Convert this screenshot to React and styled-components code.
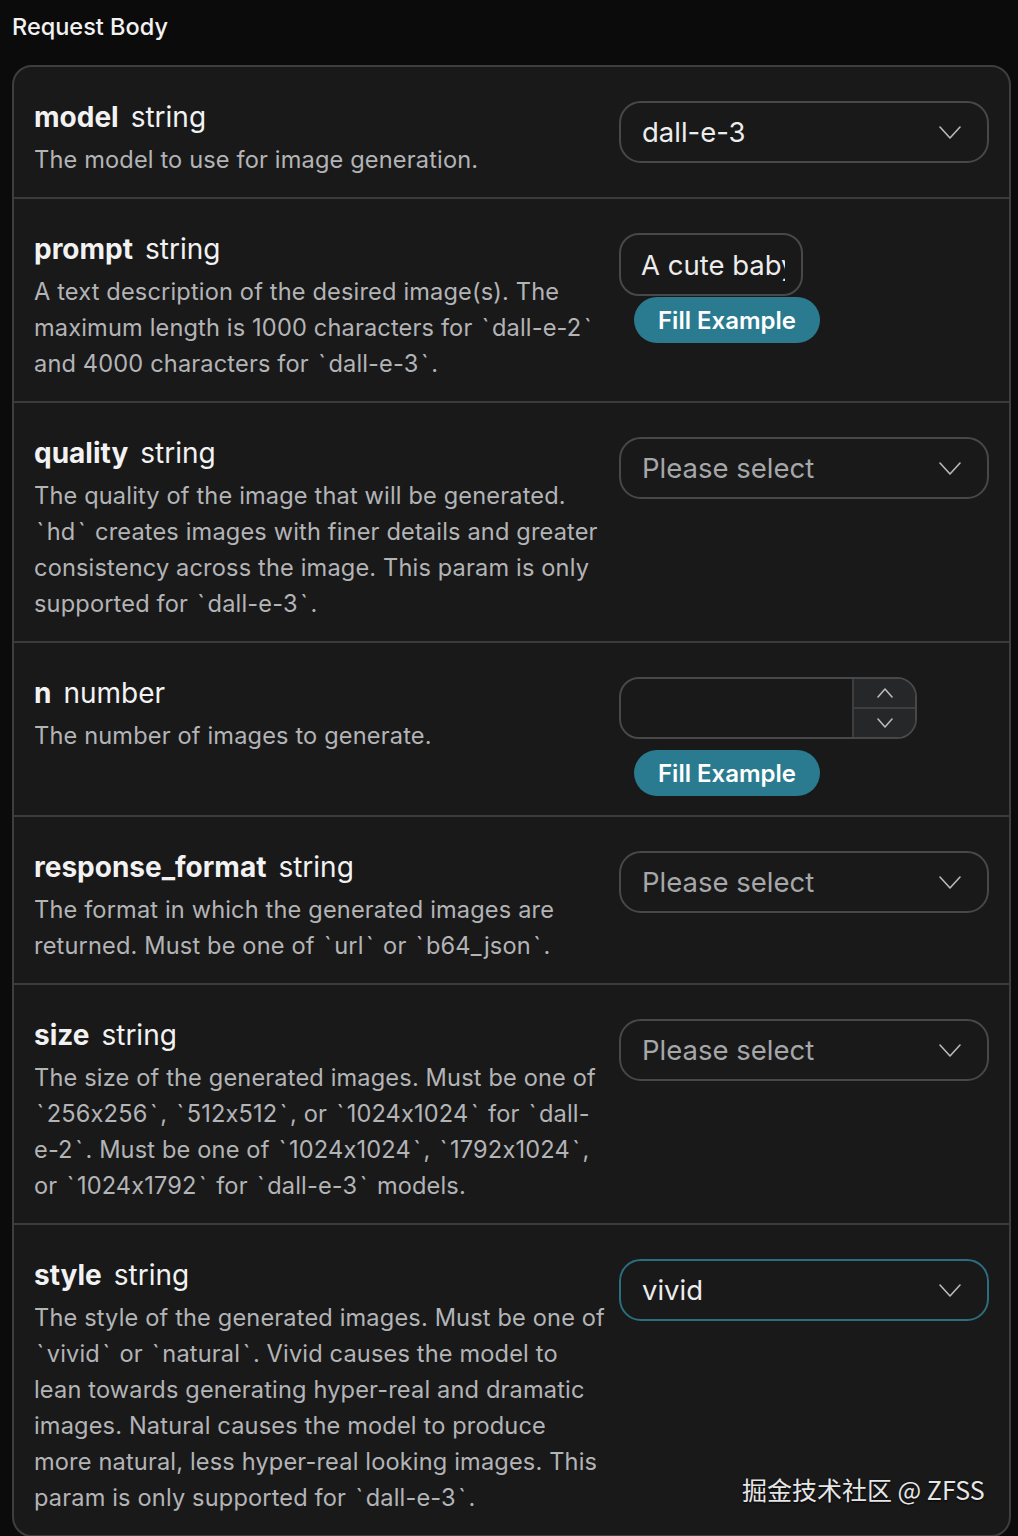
import styled, { createGlobalStyle } from "styled-components";

const GlobalStyle = createGlobalStyle`
  html, body {
    margin: 0;
    padding: 0;
    background: #0b0b0b;
    font-family: Inter, "Noto Sans", "Noto Sans CJK SC", sans-serif;
    font-feature-settings: "calt" 0;
    color: #ececec;
  }
  * { box-sizing: border-box; }
`;

const Page = styled.div`
  padding: 10px 7px 2px 12px;
`;

const Heading = styled.h2`
  margin: 0 0 21px;
  font-size: 23.5px;
  line-height: 34px;
  font-weight: 500;
  color: #f2f2f2;
`;

const Card = styled.div`
  border: 2px solid #3e3e3f;
  border-radius: 20px;
  background: #19191a;
  overflow: hidden;
`;

const Row = styled.div`
  display: flex;
  gap: 12px;
  padding: 32px 20px 19px 20px;
  & + & {
    border-top: 2px solid #3b3b3c;
  }
`;

const Info = styled.div`
  width: 573px;
  flex: none;
`;

const Title = styled.div`
  font-size: 28px;
  line-height: 36px;
  color: #f2f2f2;
  b {
    font-weight: 700;
    margin-right: 12px;
  }
`;

const Desc = styled.p`
  margin: 7px 0 0;
  font-size: 23.6px;
  line-height: 36px;
  letter-spacing: 0.15px;
  color: #b3b4b6;
`;

const Tick = styled.span`
  padding: 0 2.5px;
`;

const Controls = styled.div`
  display: flex;
  flex-direction: column;
  align-items: flex-start;
  padding-top: 2px;
`;

const Select = styled.div`
  width: 370px;
  height: 62px;
  border: 2px solid ${(p) => (p.$focused ? "#2b6e80" : "#48484a")};
  border-radius: 22px;
  display: flex;
  align-items: center;
  justify-content: space-between;
  padding: 0 26px 0 21px;
  font-size: 27.5px;
  color: ${(p) => (p.$placeholder ? "#a6a7a9" : "#ececec")};
`;

const TextInput = styled.div`
  width: 184px;
  height: 63px;
  border: 2px solid #48484a;
  border-radius: 20px;
  padding: 0 0 0 20px;
  display: flex;
  align-items: center;
  font-size: 27.5px;
  color: #ececec;
  white-space: nowrap;
  overflow: hidden;
  span {
    display: block;
    width: 144px;
    overflow: hidden;
  }
`;

const NumberInput = styled.div`
  width: 298px;
  height: 62px;
  border: 2px solid #48484a;
  border-radius: 20px;
  display: flex;
  overflow: hidden;
`;

const NumberField = styled.div`
  flex: 1;
`;

const Spinner = styled.div`
  width: 63px;
  display: flex;
  flex-direction: column;
  border-left: 2px solid #3e3e3f;
  background: #262728;
`;

const SpinBtn = styled.div`
  flex: 1;
  display: flex;
  align-items: center;
  justify-content: center;
  & + & {
    border-top: 2px solid #3e3e3f;
  }
`;

const FillButton = styled.button`
  margin: ${(p) => (p.$spaced ? "11px" : "1px")} 0 0 15px;
  height: 46px;
  padding: 0 24px;
  border: none;
  border-radius: 23px;
  background: #2a7b90;
  color: #ffffff;
  font-family: inherit;
  font-size: 24px;
  font-weight: 600;
`;

const Watermark = styled.div`
  position: absolute;
  left: 742px;
  top: 1472px;
  font-size: 25px;
  line-height: 34px;
  color: #e6e6e6;
  text-shadow: 0 1px 2px rgba(0, 0, 0, 0.8);
  font-family: "Noto Sans CJK SC", Inter, sans-serif;
`;

function Chevron({ up, size = 22, color = "#b9b9bb" }) {
  const h = size / 2;
  return (
    <svg width={size} height={h + 2} viewBox={`0 0 ${size} ${h + 2}`} fill="none">
      <path
        d={up ? `M1 ${h + 1} L${size / 2} 1 L${size - 1} ${h + 1}` : `M1 1 L${size / 2} ${h + 1} L${size - 1} 1`}
        stroke={color}
        strokeWidth="1.6"
        strokeLinecap="round"
        strokeLinejoin="round"
      />
    </svg>
  );
}

function SelectBox({ value, focused }) {
  return (
    <Select $placeholder={!value} $focused={focused}>
      <span>{value || "Please select"}</span>
      <Chevron />
    </Select>
  );
}

function withTicks(text) {
  const parts = text.split("`");
  return parts.flatMap((part, i) => (i === 0 ? [part] : [<Tick key={i}>`</Tick>, part]));
}

const params = [
  {
    name: "model",
    type: "string",
    desc: "The model to use for image generation.",
    control: <SelectBox value="dall-e-3" />,
  },
  {
    name: "prompt",
    type: "string",
    desc: "A text description of the desired image(s). The maximum length is 1000 characters for `dall-e-2` and 4000 characters for `dall-e-3`.",
    control: (
      <>
        <TextInput><span>A cute baby sea otter</span></TextInput>
        <FillButton>Fill Example</FillButton>
      </>
    ),
  },
  {
    name: "quality",
    type: "string",
    desc: "The quality of the image that will be generated. `hd` creates images with finer details and greater consistency across the image. This param is only supported for `dall-e-3`.",
    control: <SelectBox />,
  },
  {
    name: "n",
    type: "number",
    desc: "The number of images to generate.",
    control: (
      <>
        <NumberInput>
          <NumberField />
          <Spinner>
            <SpinBtn><Chevron up size={16} /></SpinBtn>
            <SpinBtn><Chevron size={16} /></SpinBtn>
          </Spinner>
        </NumberInput>
        <FillButton $spaced>Fill Example</FillButton>
      </>
    ),
  },
  {
    name: "response_format",
    type: "string",
    desc: "The format in which the generated images are returned. Must be one of `url` or `b64_json`.",
    control: <SelectBox />,
  },
  {
    name: "size",
    type: "string",
    desc: "The size of the generated images. Must be one of `256x256`, `512x512`, or `1024x1024` for `dall-e-2`. Must be one of `1024x1024`, `1792x1024`, or `1024x1792` for `dall-e-3` models.",
    control: <SelectBox />,
  },
  {
    name: "style",
    type: "string",
    desc: "The style of the generated images. Must be one of `vivid` or `natural`. Vivid causes the model to lean towards generating hyper-real and dramatic images. Natural causes the model to produce more natural, less hyper-real looking images. This param is only supported for `dall-e-3`.",
    control: <SelectBox value="vivid" focused />,
  },
];

export default function App() {
  return (
    <>
      <GlobalStyle />
      <Page>
        <Heading>Request Body</Heading>
        <Card>
          {params.map((p) => (
            <Row key={p.name}>
              <Info>
                <Title>
                  <b>{p.name}</b>
                  {p.type}
                </Title>
                <Desc>{withTicks(p.desc)}</Desc>
              </Info>
              <Controls>{p.control}</Controls>
            </Row>
          ))}
        </Card>
      </Page>
      <Watermark>掘金技术社区 @ ZFSS</Watermark>
    </>
  );
}
